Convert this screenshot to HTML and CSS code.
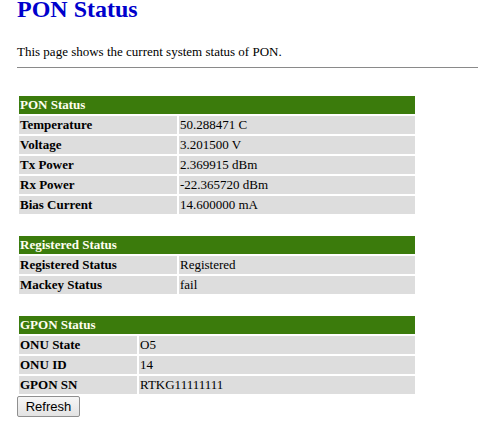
FILE: index.html
```html
<!DOCTYPE html>
<html>
<head>
<meta charset="utf-8">
<title>PON Status</title>
<link rel="stylesheet" href="styles.css">
</head>
<body>
<h1 class="title">PON Status</h1>
<p class="intro">This page shows the current system status of PON.</p>
<hr class="rule">

<table class="stat stat-a">
  <tr><td class="head" colspan="2">PON Status</td></tr>
  <tr><td class="label">Temperature</td><td class="value">50.288471 C</td></tr>
  <tr><td class="label">Voltage</td><td class="value">3.201500 V</td></tr>
  <tr><td class="label">Tx Power</td><td class="value">2.369915 dBm</td></tr>
  <tr><td class="label">Rx Power</td><td class="value">-22.365720 dBm</td></tr>
  <tr><td class="label">Bias Current</td><td class="value">14.600000 mA</td></tr>
</table>

<table class="stat stat-a">
  <tr><td class="head" colspan="2">Registered Status</td></tr>
  <tr><td class="label">Registered Status</td><td class="value">Registered</td></tr>
  <tr><td class="label">Mackey Status</td><td class="value">fail</td></tr>
</table>

<table class="stat stat-b">
  <tr><td class="head" colspan="2">GPON Status</td></tr>
  <tr><td class="label">ONU State</td><td class="value">O5</td></tr>
  <tr><td class="label">ONU ID</td><td class="value">14</td></tr>
  <tr><td class="label">GPON SN</td><td class="value">RTKG11111111</td></tr>
</table>
<button class="btn" type="button">Refresh</button>
</body>
</html>
```
FILE: styles.css
```css
html, body {
  margin: 0;
  padding: 0;
  background: #ffffff;
}
body {
  padding-left: 17px;
  font-family: "Liberation Serif", "Times New Roman", serif;
  font-size: 13px;
  color: #000;
}
.title {
  margin: 0;
  font-size: 24px;
  line-height: 18px;
  font-weight: bold;
  color: #0000cc;
}
.intro {
  margin: 26px 0 0 0;
  line-height: 15px;
}
.rule {
  margin: 8px 0 0 0;
  border: 0;
  border-top: 1px solid #8a8a8a;
  height: 0;
}
.stat {
  width: 400px;
  border-collapse: separate;
  border-spacing: 2px;
  margin-top: 18px;
  font-size: 13px;
}
.rule + .stat {
  margin-top: 26px;
}
.stat td {
  height: 18px;
  padding: 0 1px;
  line-height: 18px;
  white-space: nowrap;
  vertical-align: middle;
}
.head {
  background: #3b7b0c;
  color: #fffff0;
  font-weight: bold;
}
.label {
  background: #dddddd;
  font-weight: bold;
}
.value {
  background: #dddddd;
}
.stat-a .label { width: 156px; }
.stat-b .label { width: 116px; }
.btn {
  display: block;
  margin: 0;
  width: 63px;
  height: 21px;
  padding: 0;
  font-family: "Liberation Sans", Arial, sans-serif;
  font-size: 13px;
  color: #000;
  background: linear-gradient(#f6f6f6, #e3e3e3);
  border: 1px solid #8f8f8f;
  border-radius: 2px;
}
```
